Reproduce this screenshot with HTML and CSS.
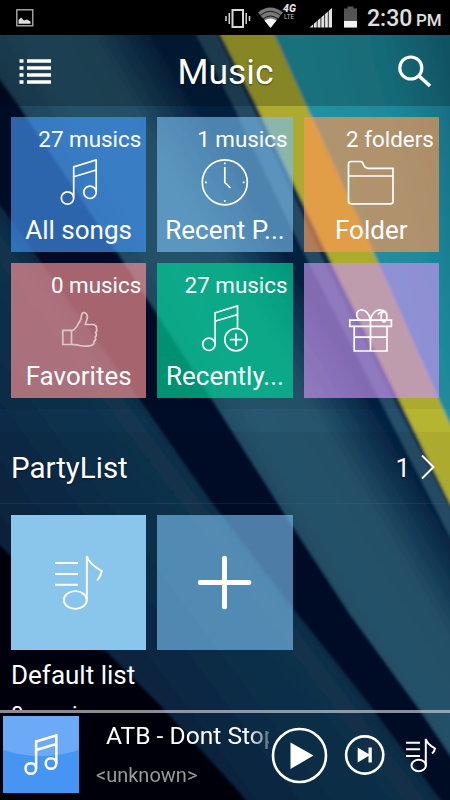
FILE: index.html
```html
<!DOCTYPE html>
<html lang="en">
<head>
<meta charset="utf-8">
<title>Music</title>
<link rel="stylesheet" href="styles.css">
</head>
<body>
<svg class="wallpaper" viewBox="0 0 450 800" aria-hidden="true">
  <defs>
    <linearGradient id="teal" gradientUnits="userSpaceOnUse" x1="330" y1="150" x2="460" y2="120"><stop offset="0" stop-color="#2199a9"/><stop offset=".55" stop-color="#1f90a2"/><stop offset="1" stop-color="#187288"/></linearGradient>
    <linearGradient id="wide" gradientUnits="userSpaceOnUse" x1="-33" y1="20" x2="100" y2="-59"><stop offset="0" stop-color="#1f4a63"/><stop offset=".3" stop-color="#28566f"/><stop offset=".64" stop-color="#26536c"/><stop offset=".83" stop-color="#123a57"/><stop offset="1" stop-color="#032142"/></linearGradient>
    <linearGradient id="mid" gradientUnits="userSpaceOnUse" x1="-256" y1="192" x2="-99" y2="74"><stop offset="0" stop-color="#07233f"/><stop offset=".6" stop-color="#0f314d"/><stop offset=".9" stop-color="#123550"/><stop offset="1" stop-color="#0a2945"/></linearGradient>
    <filter id="soft" x="-5%" y="-5%" width="110%" height="110%"><feGaussianBlur stdDeviation="1.6"/></filter>
  </defs>
  <rect width="450" height="800" fill="#000d28"/>
  <g filter="url(#soft)">
    <path fill="url(#mid)" d="M-20 178L0 205L140 400L210 500L285 598L370 705L448 810L255 810L225 776L160 705L100 645L0 545L-20 525Z"/>
    <path fill="#000511" d="M-20 525L0 545L100 645L160 705L225 776L255 810L-20 820Z"/>
    <path fill="url(#wide)" d="M-60 -10L0 80L18 105L122 260L212 400L285 515L350 615L418 708L480 800L480 -20Z"/>
    <path fill="#275069" d="M172 -10L197 36L233 105L300 245L380 400L460 556L460 -10Z"/>
    <path fill="#0b2c49" d="M215 30L251 105L323 260L394 400L460 528L460 -10Z"/>
    <path fill="#b6b530" d="M199 -10L221 36L256 105L330 260L399 400L460 524L460 -10Z"/>
    <path fill="url(#teal)" d="M255 -10L275 36L306 105L377 260L439 400L460 446L460 -10Z"/>
  </g>
</svg>
<div class="app">
  <div class="status">
    <svg class="status-pic" viewBox="0 0 18 18"><rect x=".8" y=".8" width="16" height="16" fill="none" stroke="#b8b8b8" stroke-width="1.3"/><path fill="#ddd" d="M2.500 14.800V11L5 8.500L8 11.500L11 10.500L14.500 12.500V14.800Z"/></svg>
    <div class="status-right">
      <svg width="142" height="32" viewBox="222 2 142 32">
        <g fill="none" stroke="#d8d8d8"><rect x="232.500" y="10" width="10.500" height="17" stroke-width="2"/><path stroke-width="1.500" d="M229.300 13v11M246.200 13v11M226 16v5M249.500 16v5"/></g>
        <path fill="#777" d="M258 12.500Q270 2.500 283 12.500L270.500 27.500Z"/>
        <path fill="none" stroke="#000" stroke-width=".8" d="M260 15.500Q270.500 7 281 15.500M263 19Q270.500 13 278 19"/>
        <path fill="#f4f4f4" d="M264.500 20.500Q270.500 16.500 276.500 20.500L270.500 28Z"/>
        <text class="net" x="283" y="12">4G</text><text class="lte" x="284" y="18.500">LTE</text>
        <path fill="#e2e2e2" d="M309.500 27.500L332 8V27.500Z"/><path stroke="#000" stroke-width=".8" d="M313.500 8v20M317.200 8v20M320.900 8v20M324.600 8v20M328.300 8v20"/>
        <path fill="#555" d="M344 8.500h3.500v-2h6v2h3.500V27.500h-13z"/><path fill="#f2f2f2" d="M344 21h13v6.500h-13z"/>
      </svg>
      <span class="clock">2:30</span><span class="ampm">PM</span>
    </div>
  </div>

  <header class="header">
    <svg width="34" height="28" viewBox="18 57 34 28"><path stroke="#fff" stroke-width="3.600" d="M19.500 61h4M27 61h24M19.500 68h4M27 68h24M19.500 75h4M27 75h24M19.500 82h4M27 82h24"/></svg>
    <h1 class="title">Music</h1>
    <svg width="36" height="36" viewBox="396 53 36 36" fill="none" stroke="#fff"><circle cx="410.800" cy="68" r="11" stroke-width="3.200"/><path stroke-width="3.600" d="M418.500 75.500L430 86"/></svg>
  </header>

  <main class="content">
    <section class="grid">
      <div class="tile blue"><span class="count">27 musics</span>
        <svg class="icon" viewBox="0 0 48 48"><circle cx="12.500" cy="40" r="6.200"/><circle cx="35" cy="34.300" r="6.200"/><path d="M18.700 40V9L41.200 2V34.300M18.700 18.800L41.200 12"/></svg>
        <span class="label">All songs</span></div>
      <div class="tile sky"><span class="count">1 musics</span>
        <svg class="icon" viewBox="0 0 48 48"><circle cx="23.800" cy="24.300" r="22.500"/><path d="M23.800 9V24.500L29.500 30M23.800 4.500v1.800M23.800 42.300v1.800M4 24.300h1.800M41.800 24.300h1.800"/></svg>
        <span class="label">Recent P...</span></div>
      <div class="tile orange"><span class="count">2 folders</span>
        <svg class="icon" viewBox="0 0 48 48"><path d="M1.500 43.500V6Q1.500 3.500 4 3.500H13.500Q15.500 3.500 16.200 6Q17.500 10.300 21.500 10.300H46V43.500Q46 45.800 43.500 45.800H4Q1.500 45.800 1.500 43.500ZM1.500 18H46"/></svg>
        <span class="label">Folder</span></div>
      <div class="tile rose"><span class="count">0 musics</span>
        <svg class="icon thumb" viewBox="0 0 48 48"><path d="M7.800 26.300H16.500V40.500H7.800ZM16.500 27Q21 25 23.500 19.500Q26.500 16 26.500 11.500Q26.800 8.300 29.500 8.500Q34 10.500 31.500 16.500L30.300 20.500H38.500Q42 21.500 41.500 24.500Q42.500 27 40.500 28.500Q42.500 31 40.300 33Q41.500 36 39 37.500Q39.500 41.500 34 41.900Q26 42.500 22 40.800L16.500 40.300"/></svg>
        <span class="label">Favorites</span></div>
      <div class="tile green"><span class="count">27 musics</span>
        <svg class="icon" viewBox="0 0 48 48"><circle cx="7.900" cy="40.300" r="6.200"/><path d="M14.100 40.300V8.800L36.500 2V24.500M14.100 17.300L36.500 10.500M35 29.500v12.400M28.800 35.700h12.400"/><circle cx="35" cy="35.700" r="11.200"/></svg>
        <span class="label">Recently...</span></div>
      <div class="tile violet"><span class="count"></span>
        <svg class="icon" viewBox="0 0 48 48"><path d="M2.800 16.200H44.400V22.300H2.800ZM7.200 22.300V47H40V22.300M23.500 16V47M7.200 33.200H40M23.500 15.500C22 9.500 18 5 13.500 6C8 7.500 9 14.500 13.500 15.800M23.500 15.500C25 9.500 29 5 34 6Q39 6.500 39.800 10.500M31 10.500Q33 7.500 36 8"/><ellipse cx="37" cy="12.800" rx="2.900" ry="5"/></svg>
        <span class="label"></span></div>
    </section>

    <div class="section-head"><h2 class="section-title">PartyList</h2>
      <span class="section-count">1</span>
      <svg width="14" height="26" viewBox="0 0 14 26" fill="none" stroke="#fff" stroke-width="2"><path d="M1 1.500L12.500 13L1 24.500"/></svg>
    </div>
    <section class="playlists">
      <div class="playlist">
        <div class="cover pale"><svg class="queue" width="48" height="56" viewBox="0 0 48 56"><path d="M0 8H23M0 19H23M0 29.700H23M31.800 45V1Q34 9 46.800 16Q46 21 42.300 25.500"/><ellipse cx="20.300" cy="45" rx="11.500" ry="8.900"/></svg></div>
        <div class="name">Default list</div>
        <div class="sub">0 musics</div>
      </div>
      <div class="cover sky"><svg width="54" height="56" viewBox="0 0 54 56"><path stroke="#fff" stroke-width="5" stroke-linecap="round" d="M26.500 3.200V51.800M2.200 27.500H50.800"/></svg></div>
    </section>
  </main>

  <footer class="player">
    <svg class="art" viewBox="0 0 76 77"><path fill="#4795f2" d="M0 0H76V77H0Z"/><path fill="#6caaf7" d="M0 0H76V34Q38 46 0 34Z"/><g fill="none" stroke="#fff" stroke-width="2.500"><circle cx="27.800" cy="52.500" r="5.300"/><circle cx="48" cy="47.500" r="5.300"/><path d="M33.100 52.500V25.500L53.300 19.500V47.500M33.100 34L53.300 28"/></g></svg>
    <div class="track"><div class="track-title">ATB - Dont Stop</div><div class="artist">&lt;unknown&gt;</div></div>
    <svg class="controls" width="180" height="84" viewBox="270 713 180 84">
      <g fill="none" stroke="#fff" stroke-width="2.600"><circle cx="299.500" cy="755.500" r="26.500"/><circle cx="364.700" cy="755" r="18.600"/></g>
      <path fill="#fff" d="M290.500 742.500L313.500 755.500L290.500 769ZM357.700 747.500L368.500 754V747.500H371.800V762.500H368.500V756L357.700 762.500Z"/>
      <g fill="none" stroke="#fff" stroke-width="2"><path d="M406 742.700H420M406 749.300H420M406 756H420M425.800 765.500V739Q427 744 435 748.500Q434.500 751.500 432 753.500"/><ellipse cx="418.700" cy="765.500" rx="7.200" ry="5.700"/></g>
    </svg>
  </footer>
</div>
</body>
</html>
```

FILE: styles.css
```css
* { box-sizing: border-box; }
body { margin: 0; background: #000; color: #fff; font-family: Roboto, "Liberation Sans", sans-serif; }
h1, h2 { margin: 0; font-weight: 400; }
svg { display: block; flex: none; }

.wallpaper { position: absolute; top: 0; left: 0; width: 450px; height: 800px; }
.app { position: relative; width: 450px; height: 800px; display: flex; flex-direction: column; overflow: hidden; }

.status { height: 35px; flex: none; background: #000; display: flex; align-items: center; justify-content: space-between; padding: 0 9px 0 16px; }
.status-pic { width: 18px; height: 18px; }
.status-right { display: flex; align-items: baseline; color: #e0e0e0; font-weight: 500; line-height: 38px; height: 35px; }
.status-right svg { align-self: flex-start; margin-top: 2px; }
.net { font: italic 900 10.500px Roboto, sans-serif; fill: #ddd; }
.lte { font: 400 6.500px Roboto, sans-serif; fill: #bbb; }
.clock { font-size: 23px; width: 49px; margin-left: 3px; }
.ampm { font-size: 17px; width: 25px; }

.header { height: 71px; flex: none; background: rgba(0, 0, 0, .26); display: flex; align-items: center; justify-content: space-between; padding: 0 18px; }
.title { font-size: 35.500px; line-height: 44px; padding: 2px 0 0 3px; text-shadow: 0 1px 2px rgba(0, 0, 0, .5); }

.content { flex: 1; min-height: 0; overflow: hidden; display: flex; flex-direction: column; }
.grid { flex: none; height: 303px; padding: 11px; background: rgba(0, 0, 0, .05); display: grid; grid-template-columns: repeat(3, 135.300px); grid-auto-rows: 135px; gap: 11px; }
.tile { display: flex; flex-direction: column; align-items: center; padding-top: 9px; }
.count { height: 26px; line-height: 26px; font-size: 22.400px; align-self: flex-end; margin-right: 5px; }
.icon { width: 48px; height: 48px; margin: 6px 0 9px; overflow: visible; fill: none; stroke: #fff; stroke-width: 1.700; }
.thumb { stroke: #dcc6c8; }
.label { height: 30px; line-height: 30px; font-size: 26px; white-space: nowrap; }
.blue { background: rgba(69, 149, 246, .65); }
.sky { background: rgba(121, 190, 240, .64); }
.orange { background: rgba(254, 150, 85, .65); }
.rose { background: rgba(255, 148, 150, .65); }
.green { background: rgba(0, 217, 155, .65); }
.violet { background: rgba(201, 147, 241, .65); }
.pale { background: #8ac5ec; }

.section-head { flex: none; height: 72px; margin-top: 23px; padding: 0 15px 0 11px; background: rgba(0, 0, 0, .05); border-bottom: 1px solid rgba(60, 120, 150, .18); display: flex; align-items: center; }
.section-head svg { margin-left: 11px; margin-top: -2px; }
.section-title { font-size: 29.500px; flex: 1; text-shadow: 0 1px 2px rgba(0, 0, 0, .5); }
.section-count { font-size: 26px; text-shadow: 0 1px 2px rgba(0, 0, 0, .5); }
.playlists { flex: 1; padding: 11px; display: flex; gap: 11px; background: rgba(0, 0, 0, .05); }
.playlist { width: 135.300px; }
.cover { width: 135.300px; height: 135px; display: flex; align-items: center; justify-content: center; }
.queue { fill: none; stroke: #fff; stroke-width: 1.900; overflow: visible; }
.name { font-size: 26px; line-height: 30px; margin-top: 10px; white-space: nowrap; }
.sub { font-size: 22.200px; line-height: 26px; margin-top: 11px; }

.player { flex: none; height: 90px; border-top: 3px solid rgba(205, 205, 210, .68); background: rgba(0, 0, 0, .08); display: flex; }
.art { width: 76px; height: 77px; margin: 3px 0 0 3px; }
.track { width: 173px; margin-left: 17px; padding-top: 8px; overflow: hidden; white-space: nowrap; -webkit-mask-image: linear-gradient(90deg, #000 88%, transparent 106%); mask-image: linear-gradient(90deg, #000 88%, transparent 106%); }
.track-title { font-size: 24.600px; line-height: 30px; padding-left: 10px; }
.artist { font-size: 20px; line-height: 26px; margin-top: 11px; color: #999; }
.controls { margin-left: 1px; }
```
